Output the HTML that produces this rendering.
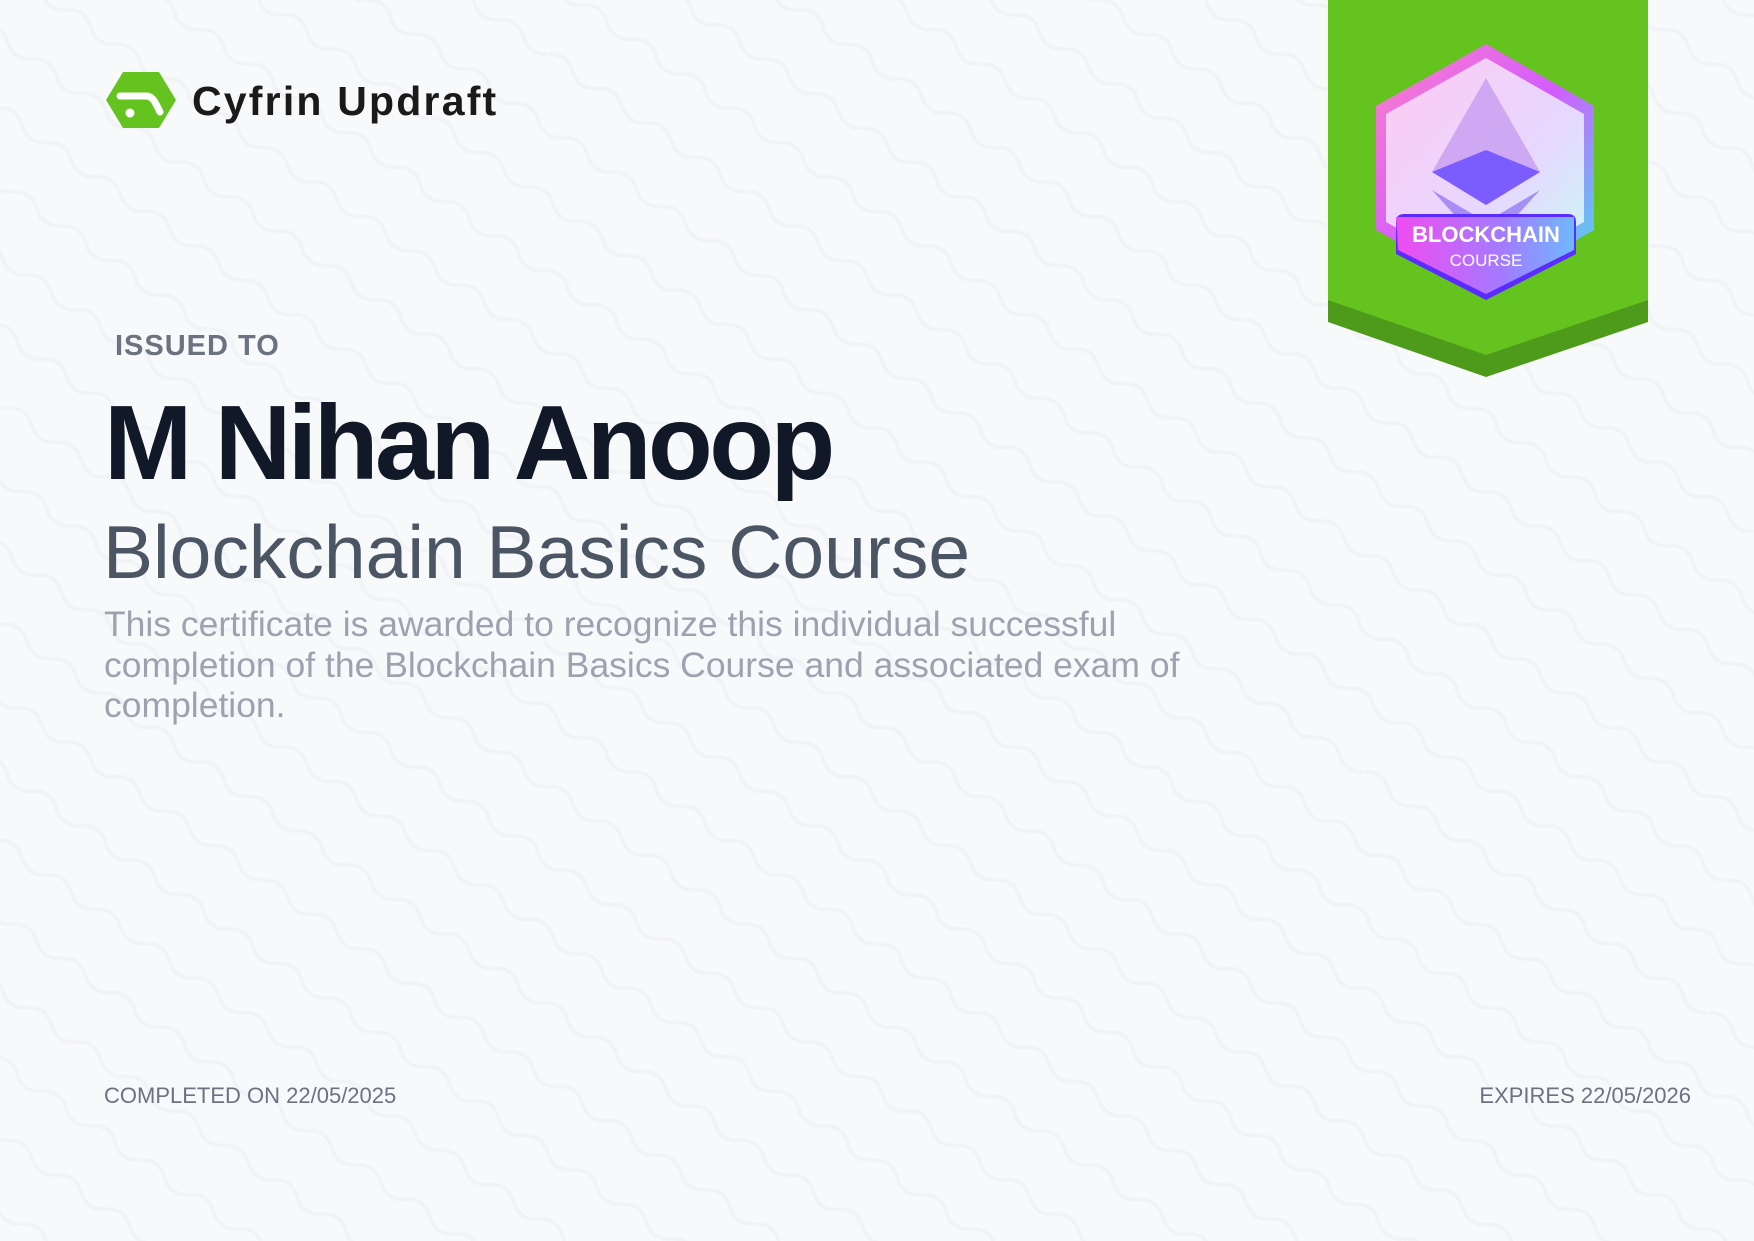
<!DOCTYPE html>
<html><head><meta charset="utf-8"><style>
html,body{margin:0;padding:0}
body{width:1754px;height:1241px;position:relative;overflow:hidden;background:#f8f9fb;font-family:"Liberation Sans",sans-serif}
.abs{position:absolute;white-space:nowrap}
</style></head><body>
<svg class="abs" style="left:0;top:0" width="1754" height="1241">
<defs><pattern id="w" width="60" height="60" patternUnits="userSpaceOnUse" patternTransform="rotate(35)">
<path d="M0 30 Q15 18 30 30 T60 30" fill="none" stroke="#f1f3f6" stroke-width="4"/></pattern></defs>
<rect width="1754" height="1241" fill="url(#w)"/>
</svg>
<!-- logo -->
<svg class="abs" style="left:106px;top:72px" width="70" height="56" viewBox="0 0 70 56">
<polygon points="17,0 53,0 70,28 53,56 17,56 0,28" fill="#65c31f"/>
<path d="M14 24 L40 24 Q46 24 50 32 L54 40" fill="none" stroke="#fff" stroke-width="7" stroke-linecap="round"/>
<circle cx="24" cy="41" r="4.5" fill="#fff"/>
</svg>
<div class="abs" style="left:192px;top:78px;font-size:41px;font-weight:bold;color:#1a1a1a;letter-spacing:2.2px">Cyfrin Updraft</div>
<!-- banner -->
<svg class="abs" style="left:1328px;top:0" width="320" height="380" viewBox="0 0 320 380">
<defs>
<linearGradient id="hx" x1="0" y1="0" x2="1" y2="1"><stop offset="0" stop-color="#ff7fc8"/><stop offset=".5" stop-color="#d35cff"/><stop offset="1" stop-color="#3ee6f0"/></linearGradient>
<linearGradient id="in" x1="0" y1="0" x2="1" y2="1"><stop offset="0" stop-color="#ffc9f3"/><stop offset=".6" stop-color="#e6d8ff"/><stop offset="1" stop-color="#c8fbf6"/></linearGradient>
<linearGradient id="lb" x1="0" y1="0" x2="1" y2="0"><stop offset="0" stop-color="#f24cf0"/><stop offset=".6" stop-color="#a27bff"/><stop offset="1" stop-color="#6fb8ff"/></linearGradient>
</defs>
<path d="M0 0 H320 V322 L158 377 L0 322 Z" fill="#4e9a1a"/>
<path d="M0 0 H320 V300 L158 355 L0 300 Z" fill="#65c31f"/>
<polygon points="158,44 266,106 266,230 158,292 48,230 48,106" fill="url(#hx)"/>
<polygon points="158,58 256,114 256,222 158,278 58,222 58,114" fill="url(#in)"/>
<polygon points="158,78 212,172 158,205 104,172" fill="#c79cf0" opacity=".8"/>
<polygon points="158,150 212,172 158,205 104,172" fill="#7a5cff"/>
<polygon points="104,190 158,222 212,190 158,250" fill="#8d6cf2" opacity=".7"/>
<path d="M64 214 H240 Q248 214 248 222 V254 L158 300 L68 254 V222 Q68 214 76 214 Z" fill="#5a2cff"/>
<path d="M68 217 H246 V250 L158 294 L70 250 Z" fill="url(#lb)"/>
<text x="158" y="242" text-anchor="middle" font-family="Liberation Sans" font-weight="bold" font-size="22" fill="#fff">BLOCKCHAIN</text>
<text x="158" y="266" text-anchor="middle" font-family="Liberation Sans" font-size="17" fill="#fff">COURSE</text>
</svg>
<div class="abs" style="left:115px;top:330px;font-size:29px;font-weight:bold;color:#6b7280;letter-spacing:1px">ISSUED TO</div>
<div class="abs" style="left:104px;top:383px;font-size:106px;font-weight:bold;color:#111827;letter-spacing:-3.5px;line-height:120px">M Nihan Anoop</div>
<div class="abs" style="left:103px;top:507px;font-size:75px;color:#4b5563;line-height:90px">Blockchain Basics Course</div>
<div class="abs" style="left:104px;top:604px;font-size:35.5px;color:#9ca3af;line-height:40.5px">This certificate is awarded to recognize this individual successful<br>completion of the Blockchain Basics Course and associated exam of<br>completion.</div>
<div class="abs" style="left:104px;top:1083px;font-size:22px;color:#6b7280">COMPLETED ON 22/05/2025</div>
<div class="abs" style="right:63px;top:1083px;font-size:22px;color:#6b7280">EXPIRES 22/05/2026</div>
</body></html>
